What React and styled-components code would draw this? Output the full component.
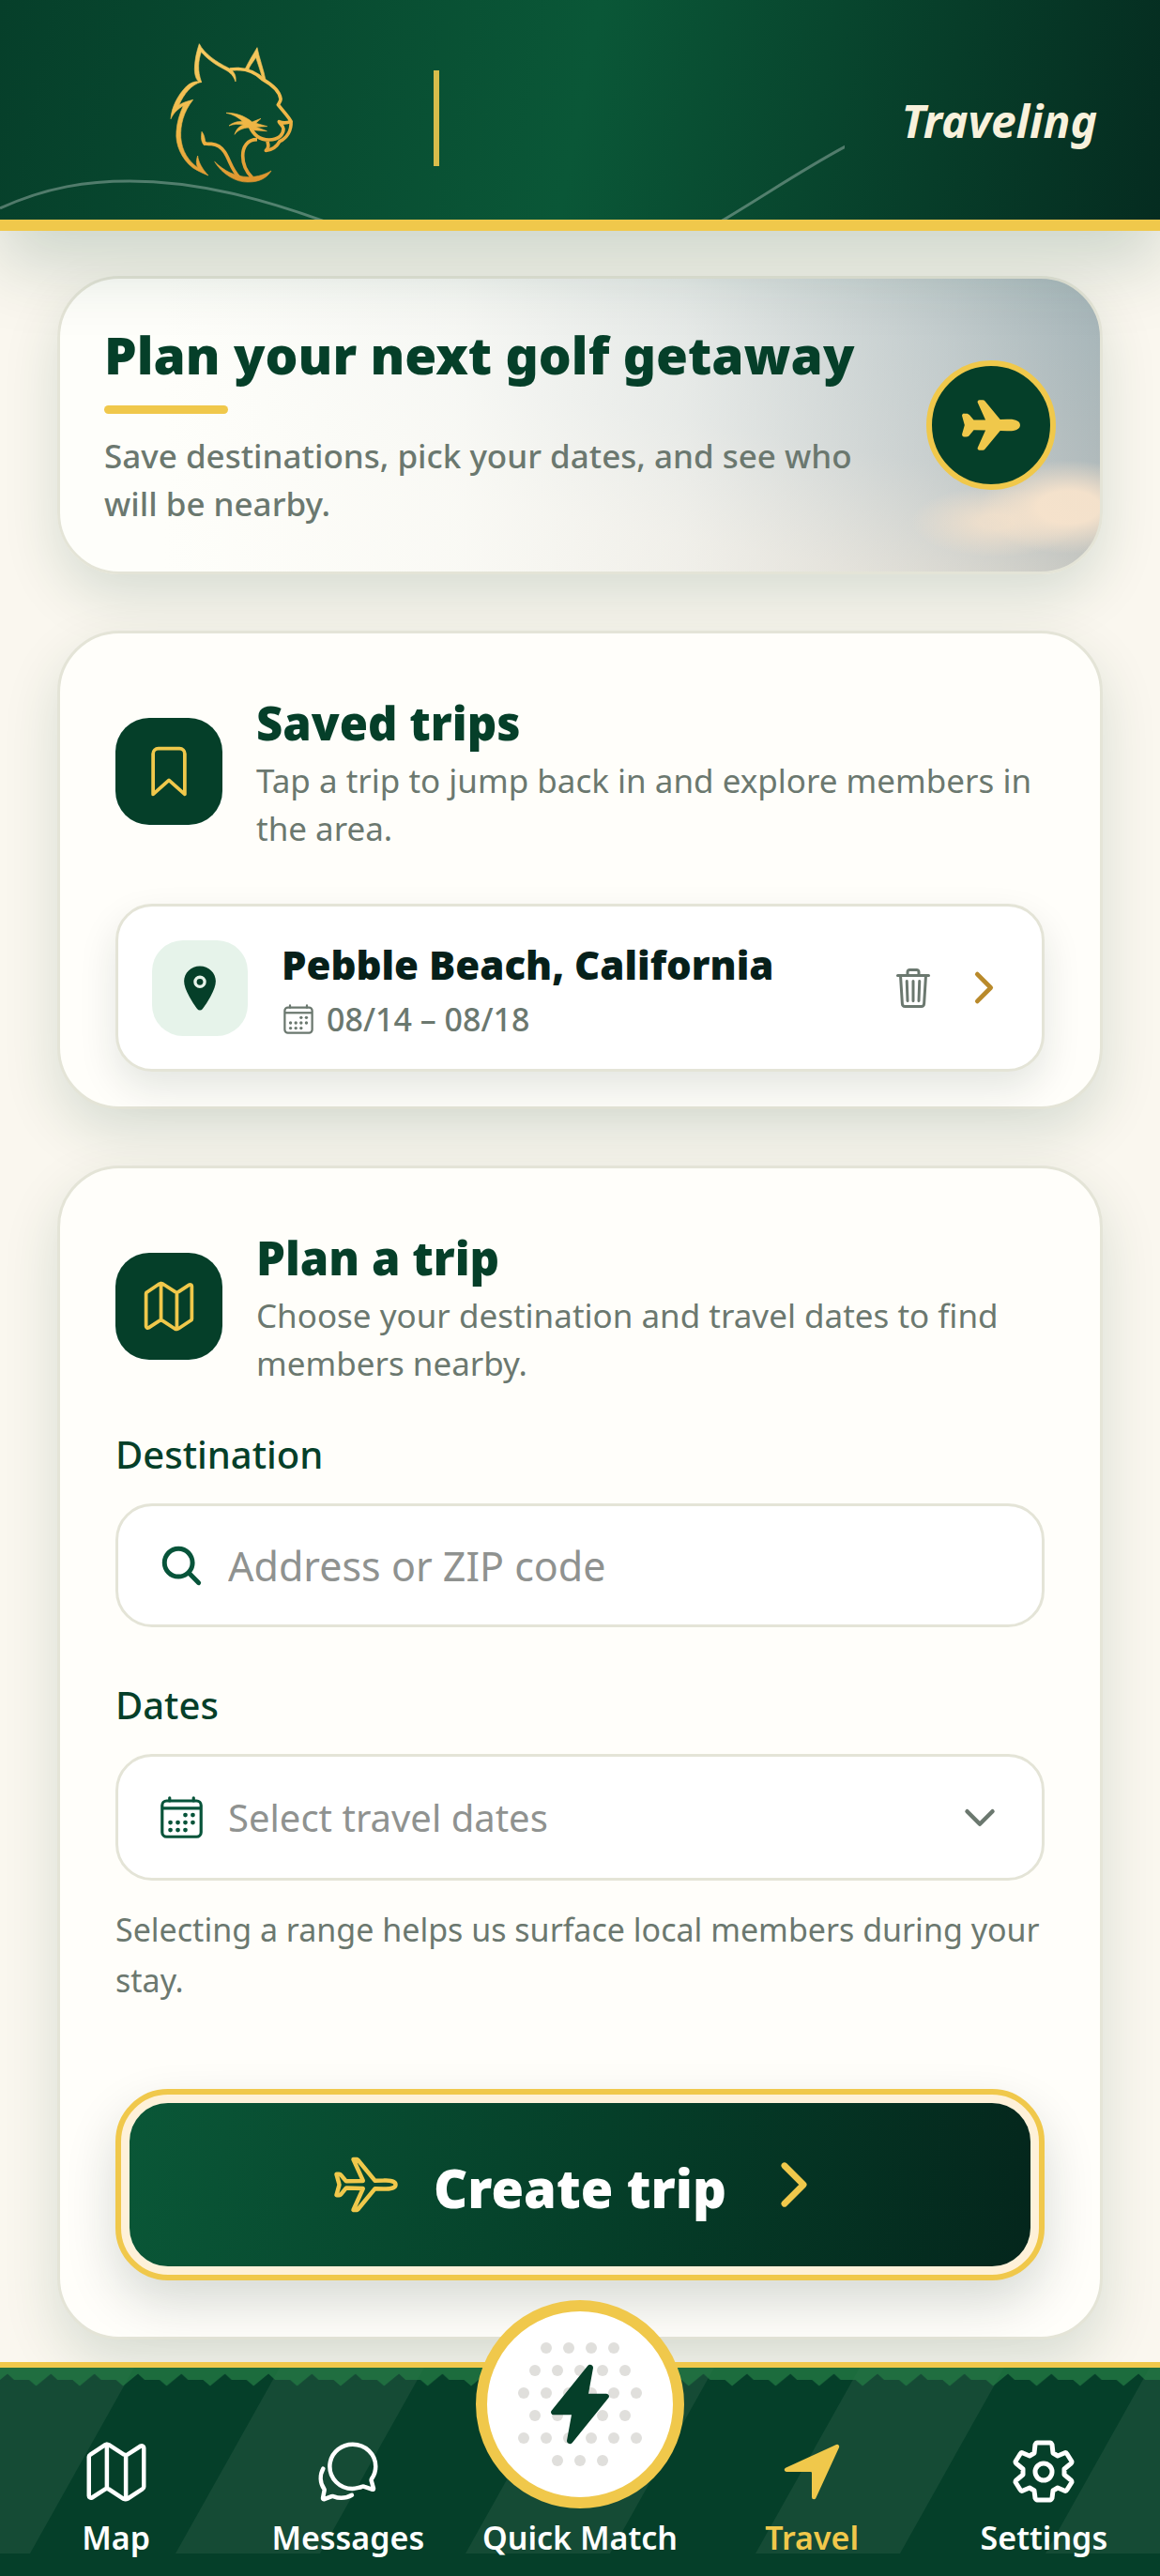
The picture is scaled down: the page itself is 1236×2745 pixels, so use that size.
import React, { useState } from 'react';
import styled, { createGlobalStyle } from 'styled-components';
import {
  IoAirplane,
  IoAirplaneOutline,
  IoBookmarkOutline,
  IoCalendarOutline,
  IoChatbubblesOutline,
  IoChevronDown,
  IoChevronForward,
  IoFlash,
  IoLocation,
  IoMapOutline,
  IoNavigate,
  IoSearch,
  IoTrashOutline,
} from 'react-icons/io5';

const GREEN = '#053f29';
const GOLD = '#f0c84b';
const MUTED = '#6b786f';
const LINE = '#e4e4d7';

const GlobalStyle = createGlobalStyle`
  * {
    box-sizing: border-box;
  }
  body {
    margin: 0;
    background: #faf7ef;
    color: ${GREEN};
    font-family: 'Noto Sans', 'Open Sans', sans-serif;
  }
  h1, h2, h3, p {
    margin: 0;
  }
  button, input, select {
    font-family: inherit;
  }
  svg {
    display: block;
    flex-shrink: 0;
  }
`;

const Page = styled.div`
  display: flex;
  flex-direction: column;
  min-height: 100vh;
`;

const Header = styled.header`
  position: relative;
  z-index: 1;
  display: flex;
  align-items: center;
  padding: 42px 67px 24px 170px;
  border-bottom: 12px solid ${GOLD};
  background: linear-gradient(101deg, #063f2a 0%, #0a5737 50%, #052c20 100%);
  box-shadow: 0 36px 72px rgba(5, 63, 41, 0.18);
`;

const Hills = styled.svg`
  position: absolute;
  left: 0;
  bottom: 0;
`;

const Logo = styled.svg`
  position: relative;
`;

const Divider = styled.span`
  width: 6px;
  height: 102px;
  margin: 0 auto 0 132px;
  background: #d8bd4b;
`;

const PageTitle = styled.h1`
  padding-top: 6px;
  color: #f8f1dc;
  font-size: 48px;
  font-style: italic;
  font-weight: 700;
  line-height: 68px;
`;

const Main = styled.main`
  flex: 1;
  display: flex;
  flex-direction: column;
  gap: 60px;
  padding: 48px 61px 24px;
`;

const Card = styled.section`
  padding: 61px 59px ${(props) => props.$bottom}px;
  border: 3px solid ${LINE};
  border-radius: 66px;
  background: #fffefa;
  box-shadow: 0 24px 60px rgba(5, 63, 41, 0.14);
`;

const Hero = styled.section`
  display: flex;
  align-items: center;
  justify-content: space-between;
  gap: 36px;
  padding: 47px;
  border: 3px solid ${LINE};
  border-radius: 66px;
  background:
    radial-gradient(ellipse 95px 50px at 97% 78%, rgba(247, 227, 204, 0.95) 35%, rgba(247, 227, 204, 0) 100%),
    radial-gradient(ellipse 90px 38px at 90% 83%, rgba(247, 227, 204, 0.75) 20%, rgba(247, 227, 204, 0) 100%),
    linear-gradient(90deg, #fefefa 10%, rgba(254, 254, 250, 0.9) 38%, rgba(254, 254, 250, 0.7) 60%, rgba(254, 254, 250, 0.3) 84%, rgba(254, 254, 250, 0) 100%),
    linear-gradient(190deg, #a5b5b9 0%, #b2bbbc 45%, #cfccc3 70%, #d8d1c4 100%);
  box-shadow: 0 24px 60px rgba(5, 63, 41, 0.14);
`;

const HeroTitle = styled.h2`
  font-size: 55px;
  font-weight: 900;
  line-height: 68px;
`;

const Underline = styled.span`
  display: block;
  width: 132px;
  height: 9px;
  margin: 20px 0 19px;
  border-radius: 5px;
  background: ${GOLD};
`;

const HeroText = styled.p`
  color: ${MUTED};
  font-size: 35px;
  font-weight: 500;
  line-height: 51px;
`;

const HeroBadge = styled.span`
  display: flex;
  flex-shrink: 0;
  align-items: center;
  justify-content: center;
  width: 138px;
  height: 138px;
  border: 6px solid ${GOLD};
  border-radius: 50%;
  background: ${GREEN};
  color: ${GOLD};
`;

const CardHead = styled.div`
  display: flex;
  align-items: center;
  gap: 36px;
`;

const Tile = styled.span`
  display: flex;
  flex-shrink: 0;
  align-items: center;
  justify-content: center;
  width: 114px;
  height: 114px;
  border-radius: 36px;
  background: ${GREEN};
  color: ${GOLD};
`;

const CardTitle = styled.h2`
  margin-bottom: 2px;
  font-size: 49px;
  font-weight: 900;
  line-height: 68px;
`;

const CardText = styled.p`
  color: ${MUTED};
  font-size: 35px;
  line-height: 51px;
`;

const Trip = styled.div`
  display: flex;
  align-items: center;
  margin-top: 55px;
  padding: 31px 36px;
  border: 3px solid ${LINE};
  border-radius: 39px;
  background: #fff;
  box-shadow: 0 18px 42px rgba(5, 40, 30, 0.11);
`;

const TripPin = styled(Tile)`
  width: 102px;
  height: 102px;
  border-radius: 33px;
  background: #e6f3ea;
  color: ${GREEN};
`;

const TripInfo = styled.div`
  display: flex;
  flex: 1;
  flex-direction: column;
  gap: 6px;
  padding: 0 36px;
`;

const TripName = styled.h3`
  color: #06201a;
  font-size: 42px;
  font-weight: 900;
  line-height: 61px;
`;

const TripDates = styled.p`
  display: flex;
  align-items: center;
  gap: 12px;
  color: ${MUTED};
  font-size: 34px;
  font-weight: 500;
  line-height: 44px;
`;

const IconButton = styled.button`
  display: flex;
  margin: 0 0 0 26px;
  padding: 0;
  border: 0;
  background: none;
  color: ${(props) => props.$color};
  cursor: pointer;
`;

const Field = styled.div`
  display: flex;
  flex-direction: column;
  gap: 24px;
  margin-top: ${(props) => props.$top}px;
`;

const Label = styled.label`
  font-size: 40px;
  font-weight: 500;
  line-height: 57px;
`;

const Control = styled.div`
  display: flex;
  align-items: center;
  gap: 24px;
  padding: 0 42px;
  border: 3px solid ${LINE};
  border-radius: 39px;
  background: #fff;
  color: #07543a;

  input, select {
    flex: 1;
    min-width: 0;
    height: 126px;
    padding: 0;
    border: 0;
    outline: 0;
    appearance: none;
    background: none;
    color: #8f9290;
    font-size: 43px;
  }
  select {
    height: 129px;
    font-size: 40px;
  }
  input::placeholder {
    color: #8f9290;
    opacity: 1;
  }
`;

const Hint = styled.p`
  margin-top: 25px;
  color: ${MUTED};
  font-size: 34px;
  line-height: 54px;
`;

const CreateButton = styled.button`
  display: block;
  width: 100%;
  margin-top: 89px;
  padding: 9px;
  border: 6px solid ${GOLD};
  border-radius: 56px;
  background: #fef1d9;
  box-shadow: 0 24px 54px rgba(5, 30, 25, 0.16);
  cursor: pointer;
`;

const CreateInner = styled.span`
  display: flex;
  align-items: center;
  justify-content: center;
  gap: 36px;
  height: 174px;
  border-radius: 41px;
  background: linear-gradient(100deg, #0a5737 0%, #053f29 52%, #04261c 100%);
  color: ${GOLD};
  font-size: 56px;
  font-weight: 900;

  b {
    padding-top: 6px;
    color: #fff;
    font-weight: inherit;
  }
`;

const Nav = styled.nav`
  position: relative;
  z-index: 1;
  border-top: 6px solid ${GOLD};
  background: ${GREEN};
`;

const Turf = styled.svg`
  position: absolute;
  top: 0;
  left: 0;
  width: 100%;
  height: ${(props) => props.$height}px;
`;

const NavList = styled.div`
  position: relative;
  display: grid;
  grid-template-columns: repeat(5, 1fr);
  padding: 75px 0 16px;
`;

const NavItem = styled.a`
  position: relative;
  display: flex;
  flex-direction: column;
  align-items: center;
  justify-content: flex-end;
  gap: 10px;
  color: ${(props) => (props.$active ? GOLD : '#fff')};
  font-size: 34px;
  font-weight: 600;
  line-height: 49px;
  text-decoration: none;
  white-space: nowrap;
`;

const MatchBadge = styled.span`
  position: absolute;
  bottom: 56px;
  display: grid;
  place-items: center;
  width: 222px;
  height: 222px;
  border: 12px solid ${GOLD};
  border-radius: 50%;
  background: #fff;
  color: ${GREEN};

  svg {
    grid-area: 1 / 1;
  }
`;

function WildcatLogo() {
  return (
    <Logo width="160" height="168" viewBox="0 36 480 504" role="img" aria-label="Wildcat">
      <defs>
        <linearGradient id="gold" gradientUnits="userSpaceOnUse" x1="200" y1="50" x2="280" y2="490">
          <stop offset="0" stopColor="#f6cb62" />
          <stop offset="0.6" stopColor="#efb645" />
          <stop offset="1" stopColor="#dd952f" />
        </linearGradient>
      </defs>
      <g fill="url(#gold)" stroke="url(#gold)" strokeWidth="2">
        {/* ears */}
        <path d="M127 50C143 82 182 108 218 126C238 136 246 152 243 171C236 152 227 142 208 132C176 116 150 96 133 76C124 104 120 134 134 173C120 174 112 154 112 130C113 98 119 74 127 50Z" />
        <path d="M274 130C284 108 298 86 312 62C318 94 332 130 340 170L329 160C322 136 314 112 308 94C298 110 288 120 284 134Z" />
        {/* nape and ruff */}
        <path d="M134 172C102 180 78 210 62 246C74 238 88 234 107 229C76 268 66 310 68 350C72 394 92 424 122 446C116 432 118 420 122 408C124 428 136 450 156 471C138 464 122 456 106 446C70 418 50 372 54 330C56 300 64 274 76 248C62 256 46 268 36 290C38 252 60 212 86 186C102 172 118 168 134 172Z" />
        {/* whiskers */}
        <path d="M213 271C248 270 276 284 296 300L324 289L308 304L344 314L308 316L343 329L300 326L286 318C266 318 248 328 240 340C244 324 254 314 268 309C252 306 238 306 222 312C234 302 250 297 266 299C252 285 236 276 213 271Z" />
        {/* chin */}
        <path d="M357 456C344 478 320 492 284 492C244 494 200 466 176 427C206 456 240 474 284 476C316 476 340 466 357 456Z" />
        <path d="M135 331C148 348 142 362 152 372L142 374C132 362 133 348 135 331Z" />
      </g>
      <g fill="none" stroke="url(#gold)" strokeWidth="11" strokeLinejoin="round">
        <path d="M225 132C270 126 306 140 330 164C362 182 384 204 387 226C388 234 381 240 379 245C394 264 412 282 420 298C406 304 394 304 382 299C384 306 396 312 396 322C396 340 382 356 350 357C322 357 300 342 288 312" />
        <path d="M420 298C422 326 408 350 384 362C374 380 362 390 340 391C350 382 348 374 345 362" />
        <path d="M312 356C280 356 266 380 266 408C266 440 280 462 296 478" />
        <path d="M144 366C148 372 154 370 166 370C188 372 200 384 208 396C224 420 230 454 256 478" />
      </g>
    </Logo>
  );
}

function GearIcon() {
  return (
    <svg
      width="72"
      height="72"
      viewBox="-36 -36 72 72"
      fill="none"
      stroke="currentColor"
      strokeWidth="5"
      strokeLinejoin="round"
      aria-hidden="true"
    >
      <path d="M-7 -31H7Q8 -31 9 -29L10 -20L15 -17L22 -20Q24 -21 25 -19L30 -11Q30 -9 28 -8L22 -3V3L28 8Q30 9 30 11L25 19Q24 21 22 20L15 17L10 20L9 28Q8 30 7 30H-7Q-8 30 -9 28L-10 20L-15 17L-22 20Q-24 21 -25 19L-30 11Q-30 9 -28 8L-22 3V-3L-28 -8Q-30 -9 -30 -11L-25 -19Q-24 -21 -22 -20L-15 -17L-10 -20L-9 -29Q-8 -31 -7 -31Z" />
      <circle r="9" />
    </svg>
  );
}

const dotRows = [
  [-36, -12, 12, 36],
  [-48, -24, 0, 24, 48],
  [-60, -36, -12, 12, 36, 60],
  [-48, -24, 0, 24, 48],
  [-60, -36, -12, 12, 36, 60],
  [-24, 0, 24],
];

function BallDots() {
  return (
    <svg width="144" height="144" viewBox="-72 -72 144 144" fill="#e0dfdc" aria-hidden="true">
      {dotRows.map((row, i) => row.map((x) => <circle key={`${i}:${x}`} cx={x} cy={-60 + i * 24} r="6" />))}
    </svg>
  );
}

const navItems = [
  { label: 'Map', icon: <IoMapOutline size={72} /> },
  { label: 'Messages', icon: <IoChatbubblesOutline size={72} /> },
  { label: 'Quick Match', match: true },
  { label: 'Travel', icon: <IoNavigate size={72} />, active: true },
  { label: 'Settings', icon: <GearIcon /> },
];

function BottomNav() {
  return (
    <Nav>
      <Turf $height={198} viewBox="0 0 1236 198" preserveAspectRatio="none" aria-hidden="true">
        <g fill="#154b35">
          {[-122, 187, 496, 805, 1114].map((x) => (
            <path key={x} d={`M${x} 198L${x + 111} 0H${x + 265}L${x + 154} 198Z`} />
          ))}
        </g>
      </Turf>
      <Turf $height={20} aria-hidden="true">
        <defs>
          <pattern id="grass" width="46.35" height="20" patternUnits="userSpaceOnUse">
            <path d="M0 0H46.35V13L38.5 19.5L31 13H15L8 6.5L0 13Z" fill="rgba(34, 120, 66, 0.78)" />
          </pattern>
        </defs>
        <rect width="100%" height="20" fill="url(#grass)" />
      </Turf>
      <NavList>
        {navItems.map((item) => (
          <NavItem key={item.label} href="#" $active={item.active}>
            {item.match ? (
              <MatchBadge>
                <BallDots />
                <IoFlash size={90} />
              </MatchBadge>
            ) : (
              item.icon
            )}
            {item.label}
          </NavItem>
        ))}
      </NavList>
    </Nav>
  );
}

function App() {
  const [destination, setDestination] = useState('');

  return (
    <Page>
      <GlobalStyle />
      <Header>
        <Hills width="900" height="234" viewBox="0 0 900 234" fill="none" stroke="rgba(255, 255, 255, 0.3)" strokeWidth="3">
          <path d="M0 222C50 199 94 193 138 193C210 193 280 212 346 236" />
          <path d="M768 236C812 210 856 180 901 156" />
        </Hills>
        <WildcatLogo />
        <Divider />
        <PageTitle>Traveling</PageTitle>
      </Header>
      <Main>
        <Hero>
          <div>
            <HeroTitle>Plan your next golf getaway</HeroTitle>
            <Underline />
            <HeroText>Save destinations, pick your dates, and see who will be nearby.</HeroText>
          </div>
          <HeroBadge>
            <IoAirplane size={66} />
          </HeroBadge>
        </Hero>

        <Card $bottom={37}>
          <CardHead>
            <Tile>
              <IoBookmarkOutline size={60} />
            </Tile>
            <div>
              <CardTitle>Saved trips</CardTitle>
              <CardText>Tap a trip to jump back in and explore members in the area.</CardText>
            </div>
          </CardHead>
          <Trip>
            <TripPin>
              <IoLocation size={54} />
            </TripPin>
            <TripInfo>
              <TripName>Pebble Beach, California</TripName>
              <TripDates>
                <IoCalendarOutline size={36} />
                08/14 – 08/18
              </TripDates>
            </TripInfo>
            <IconButton type="button" aria-label="Delete trip" $color={MUTED}>
              <IoTrashOutline size={48} />
            </IconButton>
            <IconButton type="button" aria-label="Open trip" $color="#b98a2b">
              <IoChevronForward size={51} />
            </IconButton>
          </Trip>
        </Card>

        <Card $bottom={60}>
          <CardHead>
            <Tile>
              <IoMapOutline size={60} />
            </Tile>
            <div>
              <CardTitle>Plan a trip</CardTitle>
              <CardText>Choose your destination and travel dates to find members nearby.</CardText>
            </div>
          </CardHead>
          <Field $top={43}>
            <Label htmlFor="destination">Destination</Label>
            <Control>
              <IoSearch size={51} />
              <input
                id="destination"
                type="text"
                placeholder="Address or ZIP code"
                value={destination}
                onChange={(evt) => setDestination(evt.target.value)}
              />
            </Control>
          </Field>
          <Field $top={54}>
            <Label htmlFor="dates">Dates</Label>
            <Control>
              <IoCalendarOutline size={51} />
              <select id="dates" defaultValue="">
                <option value="">Select travel dates</option>
              </select>
              <IoChevronDown size={48} color={MUTED} />
            </Control>
          </Field>
          <Hint>Selecting a range helps us surface local members during your stay.</Hint>
          <CreateButton type="button">
            <CreateInner>
              <IoAirplaneOutline size={72} />
              <b>Create trip</b>
              <IoChevronForward size={72} />
            </CreateInner>
          </CreateButton>
        </Card>
      </Main>
      <BottomNav />
    </Page>
  );
}

export default App;
